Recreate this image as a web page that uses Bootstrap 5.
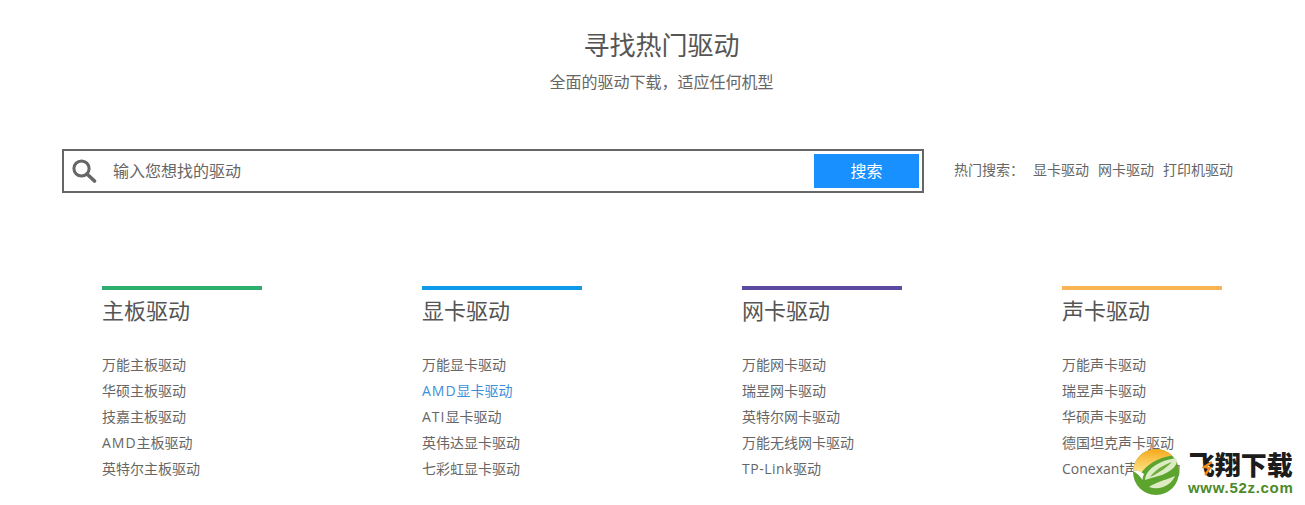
<!DOCTYPE html>
<html lang="zh-CN">
<head>
  <meta charset="UTF-8">
  <meta name="viewport" content="width=device-width, initial-scale=1.0">
  <title>寻找热门驱动</title>
  <link href="https://cdn.jsdelivr.net/npm/bootstrap@5.3.0/dist/css/bootstrap.min.css" rel="stylesheet">
  <style>
    html, body { height: 505px; overflow: hidden; }
    body { font-family: "Open Sans", "Noto Sans CJK SC", sans-serif; color: #666; background: #fff; position: relative; }
    .page-head { padding-top: 27px; height: 149px; padding-left: 18px; }
    .page-head h1 { font-size: 26px; line-height: 36px; font-weight: 400; color: #555; margin: 0; }
    .page-head p { font-size: 16px; line-height: 24px; margin: 7px 0 0; color: #666; }
    .search-row { padding-left: 62px; height: 137px; }
    .search-box { width: 862px; height: 44px; border: 2px solid #666; padding: 3px; }
    .search-icon { width: 36px; margin-left: 4px; }
    .search-text { font-size: 16px; color: #666; padding-left: 6px; }
    .search-go { width: 105px; height: 34px; background: #1890ff; color: #fff; font-size: 16px; border: 0; border-radius: 0; padding: 0; margin-left: auto; margin-right: 0; }
    .hot-words { margin-left: 30px; height: 40px; font-size: 14px; color: #666; }
    .hot-words a { color: #666; text-decoration: none; margin-right: 9px; }
    .hot-words .hot-label { margin-right: 9px; }
    .driver-cols { padding-left: 102px; display: grid; grid-template-columns: repeat(3, 320px) 1fr; }
    .driver-bar { width: 160px; height: 4px; }
    .bar-green { background: #2fae6b; }
    .bar-blue { background: #0d9ae8; }
    .bar-purple { background: #5b4a9f; }
    .bar-orange { background: #fab552; }
    .driver-cols h2 { font-size: 22px; line-height: 30px; font-weight: 400; color: #555; margin: 5px 0 27px; }
    .driver-cols a { display: block; width: fit-content; font-size: 14px; line-height: 26px; color: #666; text-decoration: none; }
    .driver-cols a.on { color: #3d8fdc; }
    .wide-latin { letter-spacing: 1px; }
    .wide-latin-sm { letter-spacing: .5px; }
    .mark-52z { position: absolute; left: 1132px; top: 447px; }
    .mark-text { padding-top: 5px; position: relative; }
    .mark-slash { position: absolute; left: 14px; top: 14px; }
    .mark-name { font-size: 26px; line-height: 27px; font-weight: 900; color: #1c1c1c; }
    .mark-url { font-family: "Liberation Sans", sans-serif; font-size: 15px; line-height: 16px; margin-top: 1px; font-weight: 700; color: #4c8a2a; letter-spacing: .7px; }
  </style>
</head>
<body>
  <div class="page-head text-center">
    <h1>寻找热门驱动</h1>
    <p>全面的驱动下载，适应任何机型</p>
  </div>

  <div class="search-row d-flex align-items-start">
    <div class="search-box d-flex align-items-center">
      <div class="search-icon d-flex align-items-center">
        <svg width="26" height="26" viewBox="0 0 26 26" fill="none" stroke="#666">
          <circle cx="10.5" cy="10.5" r="7.6" stroke-width="3"/>
          <path d="M16 16l7.5 7" stroke-width="3.6" stroke-linecap="round"/>
        </svg>
      </div>
      <span class="search-text">输入您想找的驱动</span>
      <button class="btn search-go" type="button">搜索</button>
    </div>
    <div class="hot-words d-flex align-items-center">
      <span class="hot-label">热门搜索：</span>
      <a href="#">显卡驱动</a>
      <a href="#">网卡驱动</a>
      <a href="#">打印机驱动</a>
    </div>
  </div>

  <div class="driver-cols">
    <div>
      <div class="driver-bar bar-green"></div>
      <h2>主板驱动</h2>
      <a href="#">万能主板驱动</a>
      <a href="#">华硕主板驱动</a>
      <a href="#">技嘉主板驱动</a>
      <a href="#"><span class="wide-latin">AMD</span>主板驱动</a>
      <a href="#">英特尔主板驱动</a>
    </div>
    <div>
      <div class="driver-bar bar-blue"></div>
      <h2>显卡驱动</h2>
      <a href="#">万能显卡驱动</a>
      <a href="#" class="on"><span class="wide-latin">AMD</span>显卡驱动</a>
      <a href="#"><span class="wide-latin">ATI</span>显卡驱动</a>
      <a href="#">英伟达显卡驱动</a>
      <a href="#">七彩虹显卡驱动</a>
    </div>
    <div>
      <div class="driver-bar bar-purple"></div>
      <h2>网卡驱动</h2>
      <a href="#">万能网卡驱动</a>
      <a href="#">瑞昱网卡驱动</a>
      <a href="#">英特尔网卡驱动</a>
      <a href="#">万能无线网卡驱动</a>
      <a href="#"><span class="wide-latin-sm">TP-Link</span>驱动</a>
    </div>
    <div>
      <div class="driver-bar bar-orange"></div>
      <h2>声卡驱动</h2>
      <a href="#">万能声卡驱动</a>
      <a href="#">瑞昱声卡驱动</a>
      <a href="#">华硕声卡驱动</a>
      <a href="#">德国坦克声卡驱动</a>
      <a href="#">Conexant声卡驱动</a>
    </div>
  </div>

  <!-- watermark over the last column -->
  <div class="mark-52z d-flex align-items-center gap-2">
    <svg width="48" height="48" viewBox="0 0 48 48">
      <defs>
        <linearGradient id="sun" x1="0" y1="0" x2="0" y2="1">
          <stop offset="0" stop-color="#f7a81b"/>
          <stop offset="1" stop-color="#fde58a"/>
        </linearGradient>
      </defs>
      <circle cx="24" cy="24" r="23" fill="#5da42f"/>
      <path d="M24 1A23 23 0 0 0 1 23c3-.5 6 0 8.500 1.500C14 18 24 10 40 7.500A23 23 0 0 0 24 1z" fill="url(#sun)"/>
      <path d="M1 23c4-1 8 0 11 3-1 2-1.500 4-1.500 6C8 28 5 25 1 23z" fill="#fff"/>
      <path d="M13 32c1-10 12-19 31-22l1 3c-1 7-8 11-15 14-6 2-12 3-17 5z" fill="#dcebc4"/>
      <path d="M18 29c5-7 13-12 22-15-5 5-13 11-22 15z" fill="#6fae3c"/>
      <path d="M17 39c7-5 14-6 26-11-3 8-14 15-26 11z" fill="#dcebc4"/>
    </svg>
    <div class="mark-text text-center">
      <div class="mark-name">飞翔下载</div>
      <svg class="mark-slash" width="12" height="15" viewBox="0 0 12 15"><path d="M10 1 2 6l6 1-5 7" fill="none" stroke="#f08a1d" stroke-width="2.200"/></svg>
      <div class="mark-url">www.52z.com</div>
    </div>
  </div>

  <script src="https://cdn.jsdelivr.net/npm/bootstrap@5.3.0/dist/js/bootstrap.bundle.min.js"></script>
</body>
</html>
